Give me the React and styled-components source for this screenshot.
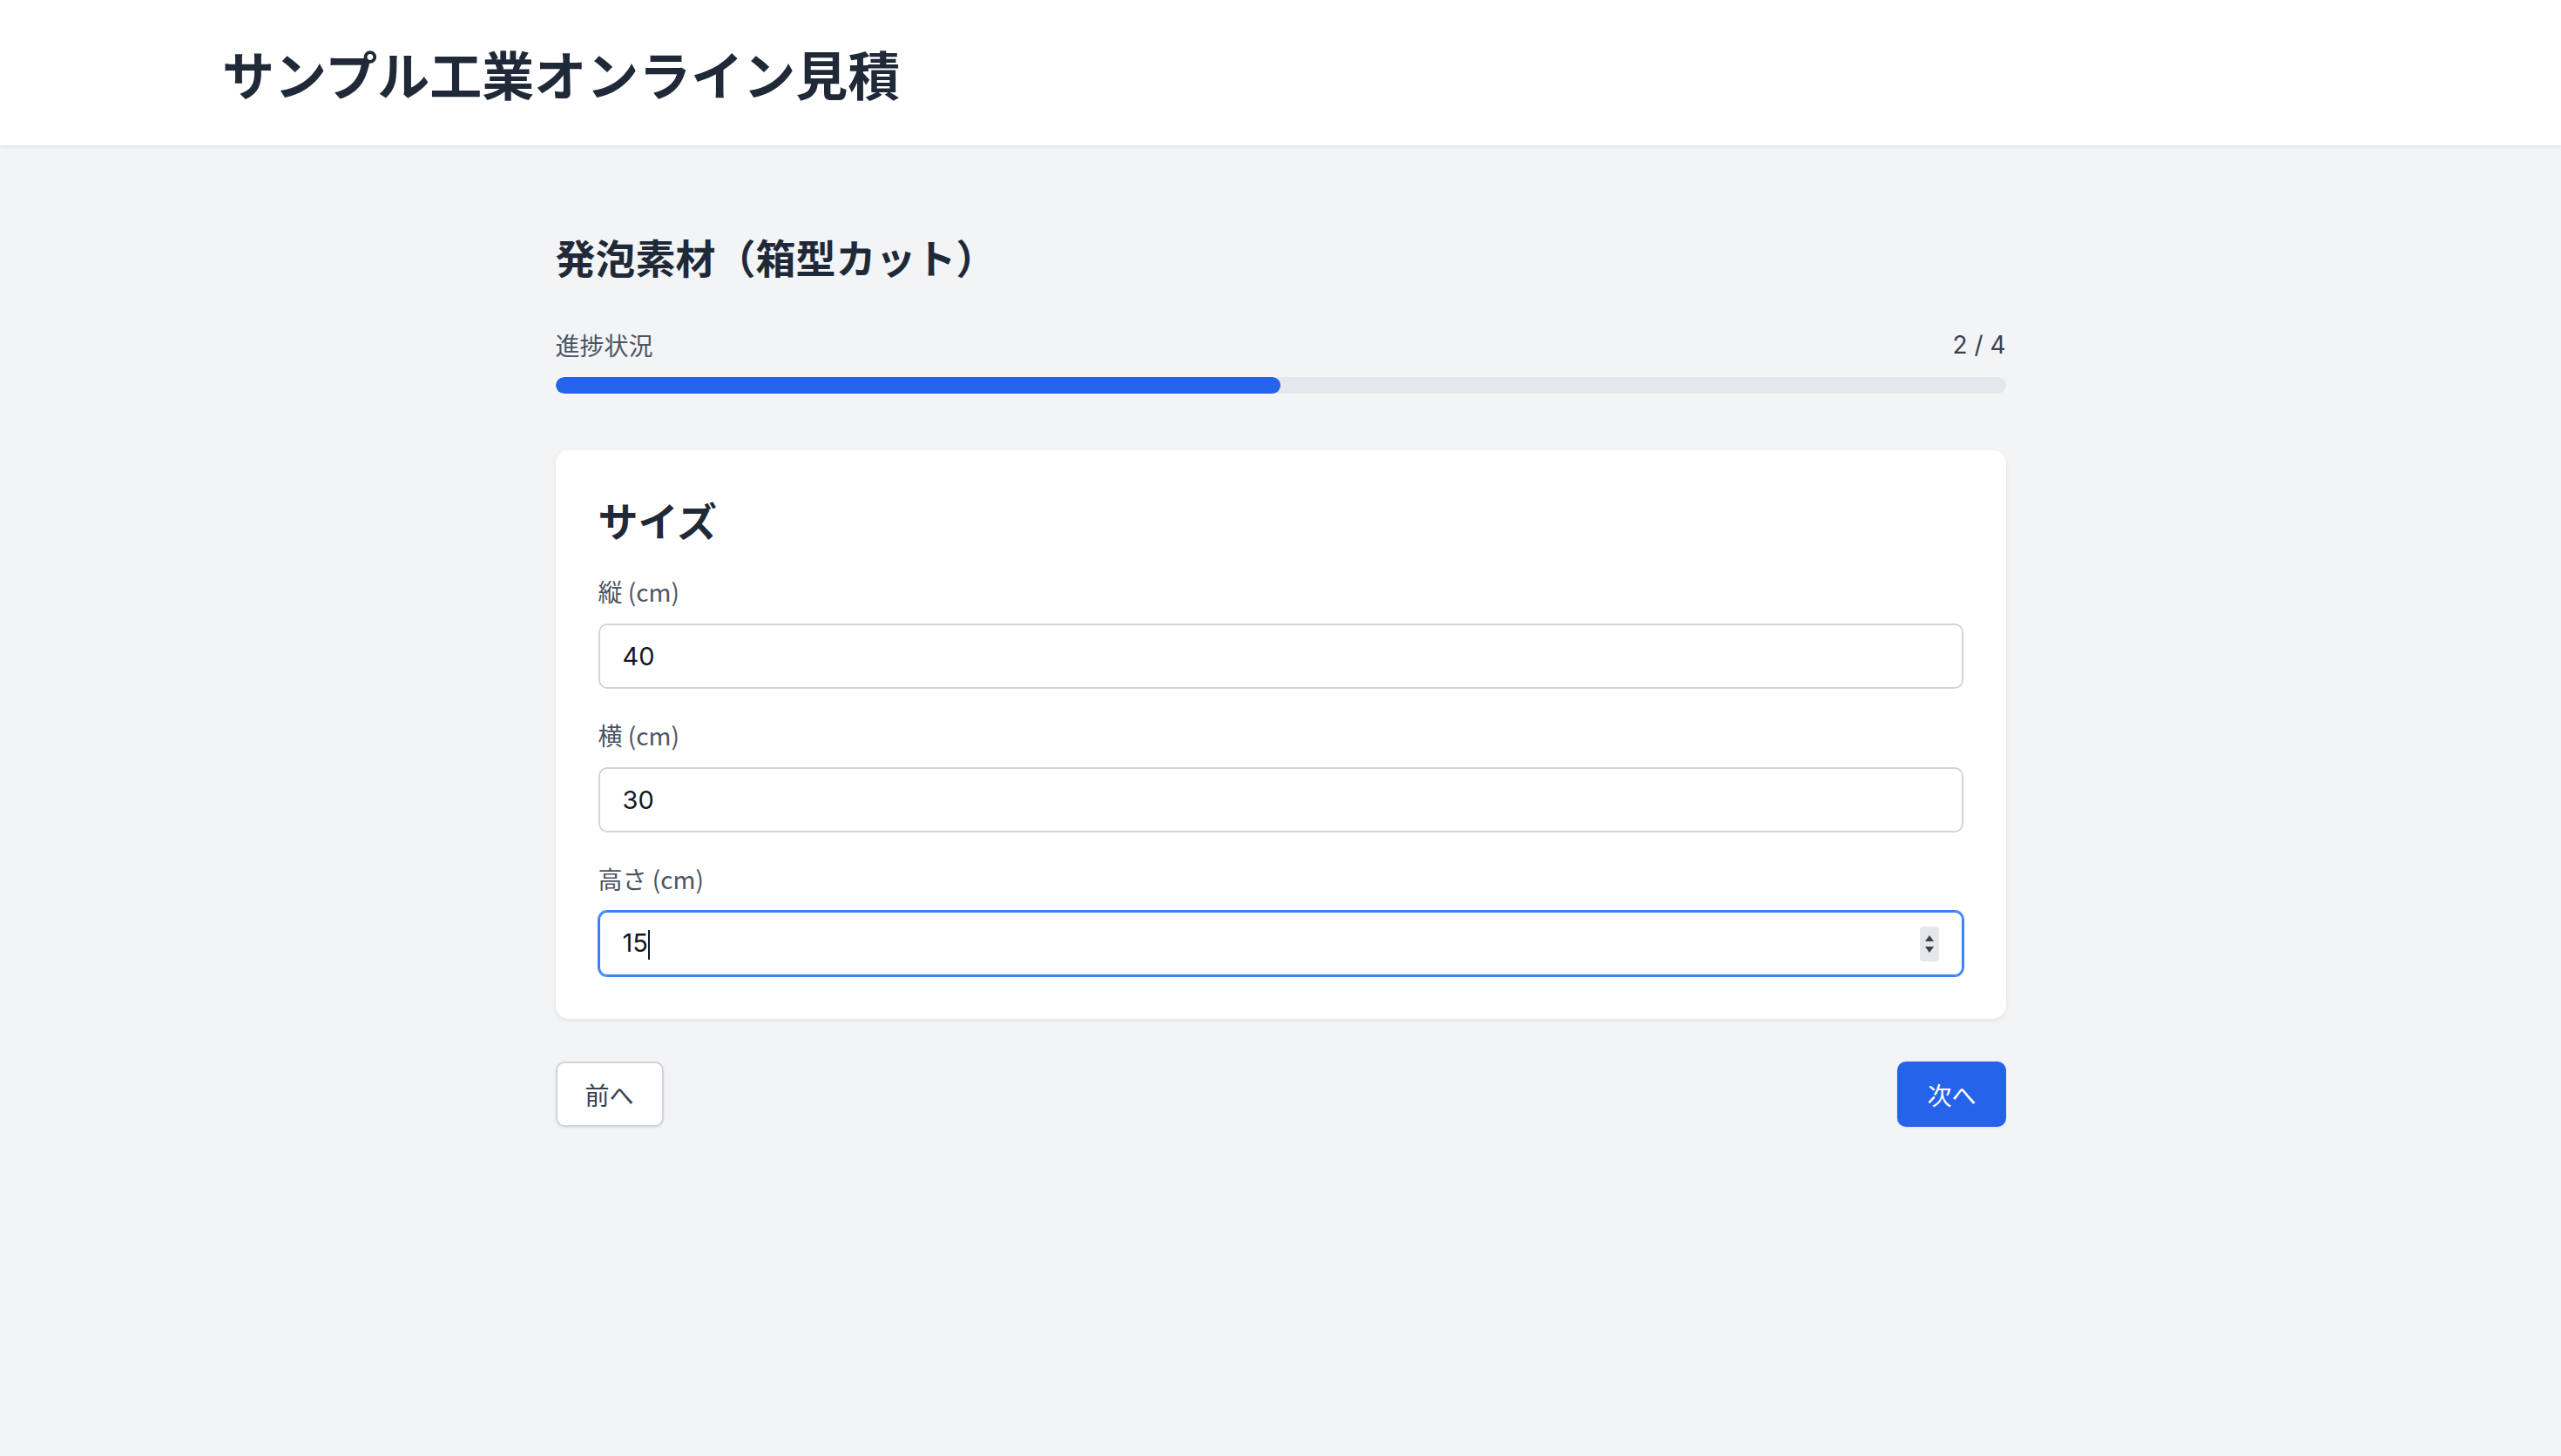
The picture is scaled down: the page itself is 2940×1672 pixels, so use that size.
import React from 'react';
import styled, { createGlobalStyle } from 'styled-components';

const GlobalStyle = createGlobalStyle`
    body {
        margin: 0;
        background: #f3f4f6;
        font-family: "Noto Sans CJK JP", "Noto Sans", sans-serif;
        color: #111827;
    }
`;

const Header = styled.header`
    height: 167px;
    background: #fff;
    box-shadow: 0 2px 4px rgba(0, 0, 0, 0.08);
    display: flex;
    align-items: center;
    padding-left: 255px;
    box-sizing: border-box;
`;

const AppTitle = styled.h1`
    margin: 0;
    font-size: 60px;
    font-weight: 700;
    color: #1f2937;
`;

const Main = styled.main`
    width: 1665px;
    margin: 0 auto;
    padding: 97px 0 0 0;
    min-height: 1408px;
    box-sizing: border-box;
`;

const PageTitle = styled.h2`
    margin: 0 0 51px;
    font-size: 46px;
    line-height: 60px;
    font-weight: 700;
    color: #1f2937;
`;

const ProgressRow = styled.div`
    display: flex;
    justify-content: space-between;
    font-size: 28px;
    line-height: 42px;
    color: #4b5563;
    margin-bottom: 16px;
`;

const Count = styled.span`
    font-family: Inter, "Noto Sans", sans-serif;
    color: #374151;
`;

const Track = styled.div`
    height: 19px;
    border-radius: 10px;
    background: #e5e7eb;
    overflow: hidden;
    margin-bottom: 65px;
`;

const Fill = styled.div`
    height: 100%;
    background: #2563eb;
    border-radius: 10px;
`;

const Card = styled.section`
    background: #fff;
    border-radius: 15px;
    box-shadow: 0 2px 5px rgba(0, 0, 0, 0.08);
    padding: 49px;
    margin-bottom: 49px;
`;

const CardTitle = styled.h3`
    margin: 0 0 32px;
    font-size: 46px;
    line-height: 60px;
    font-weight: 700;
    color: #1f2937;
`;

const Field = styled.div`
    & + & { margin-top: 32px; }
`;

const Label = styled.label`
    display: block;
    font-size: 28px;
    line-height: 42px;
    color: #4b5563;
    margin-bottom: 16px;
`;

const InputBox = styled.div`
    height: 75px;
    border: 2px solid ${p => (p.$focused ? '#3b82f6' : '#d1d5db')};
    border-radius: 10px;
    display: flex;
    align-items: center;
    padding: 0 26px;
    box-sizing: border-box;
    font-family: Inter, "Noto Sans", sans-serif;
    font-size: 29px;
    color: #111827;
    box-shadow: ${p => (p.$focused ? '0 0 0 1px #3b82f6' : 'none')};
`;

const Value = styled.span`
    flex: 1;
`;

const Caret = styled.span`
    display: inline-block;
    width: 2px;
    height: 34px;
    background: #111827;
    vertical-align: middle;
`;

const Spinner = styled.div`
    width: 22px;
    height: 40px;
    background: #e5e7eb;
    border-radius: 4px;
    display: flex;
    flex-direction: column;
    justify-content: center;
    align-items: center;
    gap: 6px;
`;

const Buttons = styled.div`
    display: flex;
    justify-content: space-between;
`;

const Button = styled.button`
    height: 75px;
    min-width: 124px;
    padding: 0 32px;
    border-radius: 10px;
    font-family: "Noto Sans CJK JP", sans-serif;
    font-size: 28px;
    border: 2px solid ${p => (p.$primary ? '#2563eb' : '#d1d5db')};
    background: ${p => (p.$primary ? '#2563eb' : '#fff')};
    color: ${p => (p.$primary ? '#fff' : '#374151')};
    box-shadow: 0 1px 3px rgba(0, 0, 0, 0.08);
`;

const fields = [
    { label: '縦 (cm)', value: '40' },
    { label: '横 (cm)', value: '30' },
    { label: '高さ (cm)', value: '15', focused: true },
];

const App = () => (
    <>
        <GlobalStyle />
        <Header>
            <AppTitle>サンプル工業オンライン見積</AppTitle>
        </Header>
        <Main>
            <PageTitle>発泡素材（箱型カット）</PageTitle>
            <ProgressRow>
                <span>進捗状況</span>
                <Count>2 / 4</Count>
            </ProgressRow>
            <Track>
                <Fill style={{ width: '50%' }} />
            </Track>
            <Card>
                <CardTitle>サイズ</CardTitle>
                {fields.map(f => (
                    <Field key={f.label}>
                        <Label>{f.label}</Label>
                        <InputBox $focused={f.focused}>
                            <Value>
                                {f.value}
                                {f.focused && <Caret />}
                            </Value>
                            {f.focused && (
                                <Spinner>
                                    <svg width="10" height="7" viewBox="0 0 10 7"><path d="M5 0L10 7H0z" fill="#374151" /></svg>
                                    <svg width="10" height="7" viewBox="0 0 10 7"><path d="M5 7L10 0H0z" fill="#374151" /></svg>
                                </Spinner>
                            )}
                        </InputBox>
                    </Field>
                ))}
            </Card>
            <Buttons>
                <Button>前へ</Button>
                <Button $primary>次へ</Button>
            </Buttons>
        </Main>
    </>
);

export default App;
